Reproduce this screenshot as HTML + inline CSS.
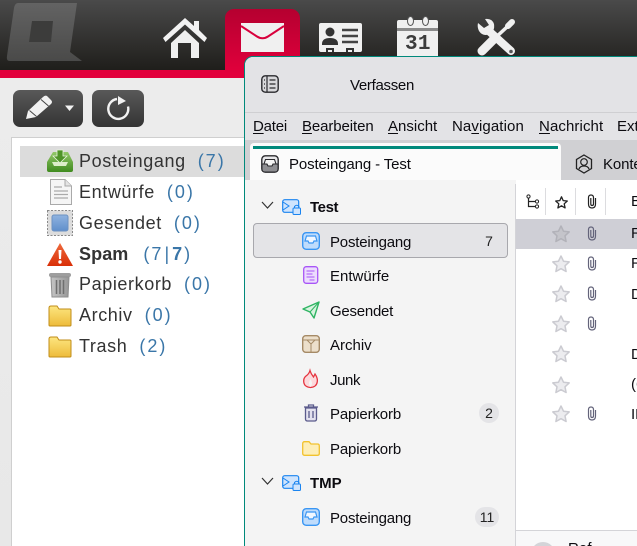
<!DOCTYPE html>
<html><head><meta charset="utf-8"><style>
html,body{margin:0;padding:0;width:637px;height:546px;overflow:hidden;background:#fff}
body{position:relative;font-family:"Liberation Sans",sans-serif}
.a{position:absolute}
.t{position:absolute;white-space:nowrap;line-height:20px}
.l{font-size:18px;color:#333;letter-spacing:.6px}
.l b{letter-spacing:.1px}
.l span{color:#3a76a8;letter-spacing:2px;margin-left:12px}
.l span b{letter-spacing:2px;margin:0}
.m{font-size:15px;color:#0c0b10;margin-top:1px}
.f{font-size:15px;color:#0c0b10;letter-spacing:-.12px;margin-top:1px}
.b{position:absolute;background:#e4e4e7;border-radius:10px;font-size:14px;text-align:center;color:#222;line-height:20px;height:20px}
u{text-decoration-thickness:1px;text-underline-offset:2px}
svg{position:absolute;overflow:visible}
</style></head><body>
<svg width="0" height="0" style="left:0;top:0"><defs>
<linearGradient id="lg" x1="0" y1="0" x2="0" y2="1"><stop offset="0" stop-color="#636363"/><stop offset="1" stop-color="#4a4a49"/></linearGradient>
<linearGradient id="gg" x1="0" y1="0" x2="0" y2="1"><stop offset="0" stop-color="#93c869"/><stop offset="1" stop-color="#3f8a1e"/></linearGradient>
<linearGradient id="yg" x1="0" y1="0" x2="0" y2="1"><stop offset="0" stop-color="#fde680"/><stop offset="1" stop-color="#edbb3a"/></linearGradient>
<linearGradient id="rg" x1="0" y1="0" x2="0" y2="1"><stop offset="0" stop-color="#ee6a3c"/><stop offset="1" stop-color="#d92f08"/></linearGradient>
<linearGradient id="bg" x1="0" y1="0" x2="0" y2="1"><stop offset="0" stop-color="#8fb3e0"/><stop offset="1" stop-color="#5f8fcb"/></linearGradient>
<linearGradient id="tg" x1="0" y1="0" x2="1" y2="0"><stop offset="0" stop-color="#c4c4c4"/><stop offset="1" stop-color="#979797"/></linearGradient>
<path id="s" d="M9 1L11.500 6.200L17.200 6.900L13 10.800L14.100 16.500L9 13.700L3.900 16.500L5 10.800L.8 6.900L6.500 6.200Z" fill="#ececef" stroke="#cbcbd1" stroke-width="1.500" stroke-linejoin="round"/>
<path id="c" d="M8.500 4V10Q8.500 14 5 14Q1.500 14 1.500 10V3.500Q1.500 1 4 1Q6.500 1 6.500 3.500V10Q6.500 11.500 5 11.500Q3.800 11.500 3.800 10V4" fill="none" stroke="#63637a" stroke-width="1.200"/>
</defs></svg>
<!-- top bar -->
<div class="a" style="left:0;top:0;width:637px;height:70px;background:linear-gradient(#4a4a4a,#1f1e1b)"></div>
<div class="a" style="left:0;top:70px;width:637px;height:8px;background:#e2003c"></div>
<div class="a" style="left:225px;top:9px;width:75px;height:65px;border-radius:9px 9px 0 0;background:linear-gradient(#b50030,#e2003c)"></div>
<div class="a" style="left:0;top:78px;width:245px;height:468px;background:linear-gradient(#ececec,#e8e8e8)"></div>
<!-- logo -->
<svg style="left:0;top:0" width="90" height="70"><path d="M18 3H77L70 52L82 61H10Q6 61 7 56L14 8Q15 3 18 3Z" fill="url(#lg)"/><path d="M32 21H53L51 42H29Z" fill="#3c3c3b"/></svg>
<!-- home -->
<svg style="left:163px;top:18px" width="44" height="41"><path d="M22 0L31 8V3H36V12L44 20L41.500 24L22 6.500L2.500 24L0 20Z" fill="#f2f2f2"/><path d="M8 25L22 12L36 25V40H28V25H15V40H8Z" fill="#efefef"/></svg>
<!-- mail -->
<svg style="left:241px;top:23px" width="43" height="29"><rect width="43" height="29" fill="#f0f0f0"/><path d="M0 3L16 13.500Q21.500 17 27 13.500L43 3" fill="none" stroke="#d8003c" stroke-width="2"/></svg>
<!-- contacts -->
<svg style="left:319px;top:23px" width="43" height="30"><rect width="43" height="29" rx="2" fill="#f0f0f0"/><circle cx="11" cy="9" r="4.500" fill="#333"/><path d="M3 21Q3 15 11 15Q19 15 19 21V22H3Z" fill="#333"/><path d="M23 7H39M23 13H39M23 19H39" stroke="#444" stroke-width="2.400"/><path d="M7 29V25H15V29H13V27H9V29Z" fill="#333"/><path d="M27 29V25H35V29H33V27H29V29Z" fill="#333"/></svg>
<!-- calendar -->
<svg style="left:397px;top:16px" width="42" height="40"><path d="M2 4H39Q41 4 41 6V40H0V6Q0 4 2 4Z" fill="#f0f0f0"/><path d="M0 12H41V15H0Z" fill="#8a8a8a"/><ellipse cx="13.500" cy="5" rx="3" ry="4.500" fill="#f0f0f0" stroke="#555"/><ellipse cx="28.500" cy="5" rx="3" ry="4.500" fill="#f0f0f0" stroke="#555"/></svg>
<div class="t" style="left:405px;top:32px;font:bold 21px/26px 'Liberation Mono',monospace;color:#3c3c3c;letter-spacing:.3px">31</div>
<!-- tools -->
<svg style="left:477px;top:18px" width="40" height="38"><path d="M5 33L17 21" stroke="#f0f0f0" stroke-width="9" stroke-linecap="round"/><path d="M17 21L31 8" stroke="#f0f0f0" stroke-width="3.500"/><path d="M31 8L35 4" stroke="#f0f0f0" stroke-width="6" stroke-linecap="round"/><path d="M13 14L34 33" stroke="#f0f0f0" stroke-width="8" stroke-linecap="round"/><path d="M1 5L7 10L12 7L8 1Q15 0 17 6Q18 13 13 16Q6 19 2 13Q0 9 1 5Z" fill="#f0f0f0"/><circle cx="34" cy="33.500" r="1.800" fill="#555"/></svg>
<!-- left buttons -->
<div class="a" style="left:13px;top:90px;width:70px;height:37px;border-radius:7px;background:linear-gradient(#595959,#343434)"></div>
<div class="a" style="left:92px;top:90px;width:52px;height:37px;border-radius:7px;background:linear-gradient(#595959,#343434)"></div>
<svg style="left:26px;top:95px" width="50" height="25"><path d="M0 24L2 16L17 2Q19 0 21 1L25 5Q27 7 25 9L10 22Z" fill="#f2f2f2"/><path d="M3.500 15.500L10.500 21.500" stroke="#444" stroke-width="1"/><path d="M15 4.500L22.500 11" stroke="#444" stroke-width="1"/><path d="M39 10.500H48L43.500 16Z" fill="#f2f2f2"/></svg>
<svg style="left:106px;top:95px" width="25" height="25"><path d="M11 4A10 10 0 1 0 22 11.500" fill="none" stroke="#f2f2f2" stroke-width="2.400"/><path d="M12 1L20 6L12 10Z" fill="#f2f2f2"/></svg>
<!-- left panel -->
<div class="a" style="left:11px;top:137px;width:234px;height:409px;background:#fff;border:solid #cfcfcf;border-width:1px 0 0 1px;box-sizing:border-box"></div>
<div class="a" style="left:20px;top:146px;width:225px;height:31px;background:#dcdcdc"></div>
<svg style="left:47px;top:149px" width="27" height="24"><path d="M6 3H21L26 13V21Q26 23 24 23H2Q0 23 0 21V13Z" fill="url(#gg)"/><path d="M5 13H21L19 17H7Z" fill="#dcedc8"/><path d="M10 1H16V7H20L13 14L6 7H10Z" fill="#4f9428" stroke="#e8f4dc" stroke-width=".8"/></svg>
<svg style="left:50px;top:179px" width="22" height="26"><path d="M.5 .5H15L21.500 7V25.500H.5Z" fill="#f5f5f5" stroke="#a9a9a9"/><path d="M15 .5V7H21.500" fill="#e4e4e4" stroke="#a9a9a9"/><path d="M4 8H12M4 12H18M4 15.500H18M4 19H18" stroke="#aaa" stroke-width="1.200"/></svg>
<svg style="left:47px;top:210px" width="26" height="26"><rect x=".5" y=".5" width="25" height="25" fill="#dcdcdc" stroke="#888" stroke-dasharray="2 1.500"/><rect x="5" y="5" width="16" height="16" rx="2" fill="url(#bg)" stroke="#6d92c2"/></svg>
<svg style="left:47px;top:243px" width="26" height="23"><path d="M13 0L26 23H0Z" fill="url(#rg)"/><path d="M11.500 7H14.500L14 16H12Z" fill="#fff"/><circle cx="13" cy="19" r="1.700" fill="#fff"/></svg>
<svg style="left:48px;top:272px" width="24" height="26"><rect x="1" y="1" width="22" height="4" rx="2" fill="#9e9e9e"/><path d="M3 5H21L20 25H4Z" fill="url(#tg)" stroke="#8e8e8e"/><path d="M8.500 8V22M12 8V22M15.500 8V22" stroke="#6f6f6f" stroke-width="1.500"/></svg>
<svg style="left:48px;top:305px" width="24" height="22"><path d="M1 3Q1 1 3 1H9L11 4H22Q23 4 23 5V20Q23 21 22 21H2Q1 21 1 20Z" fill="url(#yg)" stroke="#c08d1a"/></svg>
<svg style="left:48px;top:336px" width="24" height="22"><path d="M1 3Q1 1 3 1H9L11 4H22Q23 4 23 5V20Q23 21 22 21H2Q1 21 1 20Z" fill="url(#yg)" stroke="#c08d1a"/></svg>
<div class="t l" style="left:79px;top:151px">Posteingang<span>(7)</span></div>
<div class="t l" style="left:79px;top:182px">Entwürfe<span>(0)</span></div>
<div class="t l" style="left:79px;top:213px">Gesendet<span>(0)</span></div>
<div class="t l" style="left:79px;top:244px"><b>Spam</b><span style="margin-left:15px">(7<i style="font-style:normal;margin:0 1px">|</i><b>7</b>)</span></div>
<div class="t l" style="left:79px;top:274px">Papierkorb<span>(0)</span></div>
<div class="t l" style="left:79px;top:305px">Archiv<span>(0)</span></div>
<div class="t l" style="left:79px;top:336px">Trash<span>(2)</span></div>
<!-- TB window -->
<div class="a" style="left:244px;top:56px;width:393px;height:490px;background:#f4f4f4;border:solid #00897b;border-width:1px 0 0 1px;border-top-left-radius:9px;box-sizing:border-box"></div>
<div class="a" style="left:245px;top:57px;width:392px;height:55px;background:#e3e3e6;border-top-left-radius:8px"></div>
<div class="a" style="left:245px;top:112px;width:392px;height:1px;background:#cfcfd2"></div>
<div class="a" style="left:245px;top:113px;width:392px;height:27px;background:#e3e3e6"></div>
<div class="a" style="left:245px;top:140px;width:392px;height:40px;background:#d0d0d3"></div>
<div class="a" style="left:250px;top:143px;width:311px;height:37px;background:#fbfbfb;border-radius:4px 4px 0 0"></div>
<div class="a" style="left:253px;top:146px;width:305px;height:3px;background:#00897b"></div>
<svg style="left:261px;top:75px" width="18" height="18"><rect x=".8" y=".8" width="16.400" height="16.400" rx="3.500" fill="#d8d8db" stroke="#2a2a2e" stroke-width="1.400"/><path d="M6 1V17" stroke="#2a2a2e" stroke-width="1.200"/><path d="M8.500 5H14.500M8.500 9H14.500M8.500 13H14.500M3 5H4M3 9H4M3 13H4" stroke="#2a2a2e" stroke-width="1.200"/></svg>
<div class="t m" style="left:350px;top:75px;letter-spacing:-.3px">Verfassen</div>
<div class="t m" style="left:253px;top:116px;letter-spacing:-.2px"><u>D</u>atei</div>
<div class="t m" style="left:302px;top:116px;letter-spacing:-.1px"><u>B</u>earbeiten</div>
<div class="t m" style="left:388px;top:116px"><u>A</u>nsicht</div>
<div class="t m" style="left:452px;top:116px;letter-spacing:.1px">Na<u>v</u>igation</div>
<div class="t m" style="left:539px;top:116px;letter-spacing:.1px"><u>N</u>achricht</div>
<div class="t m" style="left:617px;top:116px">Ext</div>
<svg style="left:261px;top:155px" width="18" height="18"><rect x=".8" y=".8" width="16.400" height="16.400" rx="3.500" fill="#e8e8ea" stroke="#2a2a2e" stroke-width="1.400"/><path d="M1 9H6L7 11H11L12 9H17V14Q17 17 14 17H4Q1 17 1 14Z" fill="#8e8e92" stroke="#2a2a2e"/><path d="M4.500 4.500H13.500L15 9H12L11 11H7L6 9H3Z" fill="#f4f4f4" stroke="#2a2a2e" stroke-width="1.100"/></svg>
<div class="t f" style="left:289px;top:154px">Posteingang - Test</div>
<svg style="left:575px;top:154px" width="18" height="20"><path d="M9 1L16.500 5.500V14.500L9 19L1.500 14.500V5.500Z" fill="none" stroke="#222" stroke-width="1.300"/><circle cx="9" cy="8" r="3.300" fill="none" stroke="#222" stroke-width="1.200"/><path d="M4 15Q5 12 9 12Q13 12 14 15" fill="none" stroke="#222" stroke-width="1.200"/></svg>
<div class="t f" style="left:603px;top:154px">Konte</div>
<!-- folder pane -->
<div class="a" style="left:245px;top:184px;width:271px;height:362px;background:#f4f4f4"></div>
<div class="a" style="left:515px;top:184px;width:122px;height:362px;background:#fff;border-left:1.500px solid #d4d4d8;box-sizing:border-box"></div>
<div class="a" style="left:245px;top:180px;width:392px;height:4px;background:#f4f4f4"></div>
<div class="a" style="left:516px;top:180px;width:121px;height:4px;background:#fff"></div>
<svg style="left:261px;top:201px" width="13" height="9"><path d="M1 1L6.500 7L12 1" fill="none" stroke="#333" stroke-width="1.200"/></svg>
<svg style="left:261px;top:477px" width="13" height="9"><path d="M1 1L6.500 7L12 1" fill="none" stroke="#333" stroke-width="1.200"/></svg>
<svg style="left:282px;top:199px" width="19" height="16"><rect x=".7" y=".7" width="16" height="12.600" rx="2" fill="#cfe4fd" stroke="#1a84f0" stroke-width="1.200"/><path d="M1 3L7 7L1 11" fill="none" stroke="#1a84f0"/><rect x="11" y="9" width="7.500" height="6.500" rx="1" fill="#cfe4fd" stroke="#1a84f0"/><path d="M12.500 9V7.500Q14.700 5 17 7.500V9" fill="none" stroke="#1a84f0"/></svg>
<svg style="left:282px;top:475px" width="19" height="16"><rect x=".7" y=".7" width="16" height="12.600" rx="2" fill="#cfe4fd" stroke="#1a84f0" stroke-width="1.200"/><path d="M1 3L7 7L1 11" fill="none" stroke="#1a84f0"/><rect x="11" y="9" width="7.500" height="6.500" rx="1" fill="#cfe4fd" stroke="#1a84f0"/><path d="M12.500 9V7.500Q14.700 5 17 7.500V9" fill="none" stroke="#1a84f0"/></svg>
<div class="t m" style="left:310px;top:197px;font-weight:bold;letter-spacing:-.4px">Test</div>
<div class="t m" style="left:310px;top:473px;font-weight:bold">TMP</div>
<div class="a" style="left:253px;top:223px;width:255px;height:35px;background:#e4e4e7;border:1px solid #a8a8ad;border-radius:4px;box-sizing:border-box"></div>
<svg style="left:302px;top:232px" width="18" height="18"><rect x=".7" y=".7" width="16.600" height="16.600" rx="3.500" fill="#bfdcfc" stroke="#3a96f3" stroke-width="1.400"/><path d="M4.500 4H13.500L15 9H12L11 11H7L6 9H3Z" fill="#f1f7ff" stroke="#3a96f3" stroke-width="1.200"/></svg>
<svg style="left:302px;top:508px" width="18" height="18"><rect x=".7" y=".7" width="16.600" height="16.600" rx="3.500" fill="#bfdcfc" stroke="#3a96f3" stroke-width="1.400"/><path d="M4.500 4H13.500L15 9H12L11 11H7L6 9H3Z" fill="#f1f7ff" stroke="#3a96f3" stroke-width="1.200"/></svg>
<svg style="left:303px;top:266px" width="16" height="18"><rect x=".7" y=".7" width="14" height="16.600" rx="2.500" fill="#ecdcfd" stroke="#a855f7" stroke-width="1.300"/><path d="M3.500 5H11.500M3.500 8H9.500M3.500 11H11.500M6.500 14H11.500" stroke="#a855f7"/></svg>
<svg style="left:302px;top:301px" width="18" height="18"><path d="M1 8L17 1L12 17L8 11Z" fill="#d8f3df" stroke="#2fb463" stroke-width="1.400" stroke-linejoin="round"/><path d="M8 11L17 1" stroke="#2fb463"/></svg>
<svg style="left:302px;top:335px" width="18" height="18"><rect x=".7" y=".7" width="16.600" height="16.600" rx="3" fill="#ecdfcb" stroke="#a58a66" stroke-width="1.400"/><path d="M1 5H17M5 5L9 9L13 5M9 9V17" fill="none" stroke="#a58a66"/></svg>
<svg style="left:303px;top:370px" width="15" height="18"><path d="M7 .5Q8 4 10.500 7L12 4Q14.800 8 14.300 11.500Q13.800 17 7.500 17.500Q1 17 .7 11.500Q.5 8 3 6Q6 4 7 .5Z" fill="#fcd9dc" stroke="#e5343f" stroke-width="1.300"/><path d="M7.500 17Q4.500 14 7.500 9Q10.500 14 7.500 17Z" fill="#f4f4f4"/></svg>
<svg style="left:303px;top:404px" width="16" height="18"><path d="M1 3H15M5.500 3V1H10.500V3" fill="none" stroke="#5b5b8c" stroke-width="1.300"/><path d="M2.500 4H13.500V15Q13.500 17 11.500 17H4.500Q2.500 17 2.500 15Z" fill="#e3e1ee" stroke="#5b5b8c" stroke-width="1.300"/><path d="M6 7V14M10 7V14" stroke="#5b5b8c" stroke-width="1.300"/></svg>
<svg style="left:302px;top:441px" width="18" height="15"><path d="M.7 2.500Q.7 .7 2.500 .7H7L9 3H15.500Q17.300 3 17.300 5V12.500Q17.300 14.300 15.500 14.300H2.500Q.7 14.300 .7 12.500Z" fill="#fdeeb8" stroke="#f2c22e" stroke-width="1.300"/></svg>
<div class="t m" style="left:330px;top:232px;letter-spacing:-.2px">Posteingang</div>
<div class="t m" style="left:330px;top:266px">Entwürfe</div>
<div class="t m" style="left:330px;top:301px;letter-spacing:-.25px">Gesendet</div>
<div class="t m" style="left:330px;top:335px">Archiv</div>
<div class="t m" style="left:330px;top:370px;letter-spacing:-.4px">Junk</div>
<div class="t m" style="left:330px;top:404px;letter-spacing:-.15px">Papierkorb</div>
<div class="t m" style="left:330px;top:439px;letter-spacing:-.15px">Papierkorb</div>
<div class="t m" style="left:330px;top:508px;letter-spacing:-.2px">Posteingang</div>
<div class="b" style="left:479px;top:231px;width:20px;background:#e4e4e7">7</div>
<div class="b" style="left:479px;top:403px;width:20px">2</div>
<div class="b" style="left:475px;top:507px;width:24px">11</div>
<!-- thread list -->
<svg style="left:526px;top:194px" width="14" height="15"><path d="M2.500 3V12.500H9.500M2.500 7.500H9.500" fill="none" stroke="#222" stroke-width="1.200"/><circle cx="2.500" cy="2.500" r="1.600" fill="#fff" stroke="#222"/><circle cx="11" cy="7.500" r="1.600" fill="#fff" stroke="#222"/><circle cx="11" cy="12.500" r="1.600" fill="#fff" stroke="#222"/></svg>
<svg style="left:555px;top:196px" width="13" height="13"><path d="M6.500 .8L8.200 4.600L12.300 5L9.200 7.800L10.100 11.900L6.500 9.800L2.900 11.900L3.800 7.800L.7 5L4.800 4.600Z" fill="none" stroke="#222" stroke-width="1.300" stroke-linejoin="round"/></svg>
<div class="a" style="left:545px;top:188px;width:1px;height:27px;background:#dcdcdf"></div>
<div class="a" style="left:575px;top:188px;width:1px;height:27px;background:#dcdcdf"></div>
<div class="a" style="left:605px;top:188px;width:1px;height:27px;background:#dcdcdf"></div>
<svg style="left:587px;top:194px" width="10" height="15"><path d="M8.500 4V10Q8.500 14 5 14Q1.500 14 1.500 10V3.500Q1.500 1 4 1Q6.500 1 6.500 3.500V10Q6.500 11.500 5 11.500Q3.800 11.500 3.800 10V4" fill="none" stroke="#222" stroke-width="1.200"/></svg>
<div class="a" style="left:516px;top:219px;width:121px;height:30px;background:#cfcfd6"></div>
<svg style="left:552px;top:225px" width="18" height="18"><path d="M9 1L11.500 6.200L17.200 6.900L13 10.800L14.100 16.500L9 13.700L3.900 16.500L5 10.800L.8 6.900L6.500 6.200Z" fill="#c4c4ca" stroke="#b2b2b9" stroke-width="1.500" stroke-linejoin="round"/></svg>
<svg style="left:552px;top:255px" width="18" height="18"><use href="#s"/></svg>
<svg style="left:552px;top:285px" width="18" height="18"><use href="#s"/></svg>
<svg style="left:552px;top:315px" width="18" height="18"><use href="#s"/></svg>
<svg style="left:552px;top:345px" width="18" height="18"><use href="#s"/></svg>
<svg style="left:552px;top:376px" width="18" height="18"><use href="#s"/></svg>
<svg style="left:552px;top:405px" width="18" height="18"><use href="#s"/></svg>
<svg style="left:587px;top:226px" width="10" height="15"><use href="#c"/></svg>
<svg style="left:587px;top:256px" width="10" height="15"><use href="#c"/></svg>
<svg style="left:587px;top:286px" width="10" height="15"><use href="#c"/></svg>
<svg style="left:587px;top:316px" width="10" height="15"><use href="#c"/></svg>
<svg style="left:587px;top:406px" width="10" height="15"><use href="#c"/></svg>
<div class="t m" style="left:631px;top:191px">B</div>
<div class="t m" style="left:631px;top:223px">R</div>
<div class="t m" style="left:631px;top:253px">R</div>
<div class="t m" style="left:631px;top:284px">D</div>
<div class="t m" style="left:631px;top:344px">D</div>
<div class="t m" style="left:631px;top:374px">(6</div>
<div class="t m" style="left:631px;top:404px">IH</div>
<div class="a" style="left:516px;top:530px;width:121px;height:16px;background:#f8f8f9;border-top:1px solid #d4d4d8;box-sizing:border-box"></div>
<div class="a" style="left:531px;top:542px;width:24px;height:24px;border-radius:50%;background:#d4d4d8"></div>
<div class="t m" style="left:568px;top:538px;letter-spacing:.1px">Ref</div>
</body></html>
